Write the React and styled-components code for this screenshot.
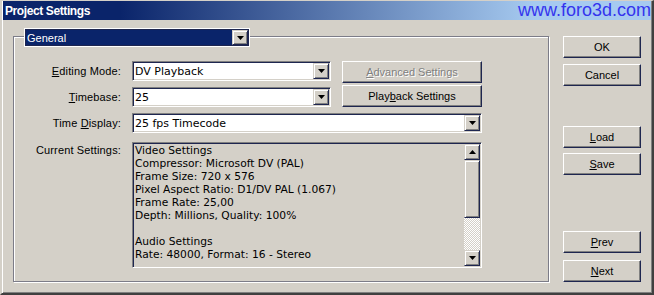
import React from 'react';
import styled, { createGlobalStyle } from 'styled-components';

const Global = createGlobalStyle`
  html, body { margin: 0; padding: 0; background: #d4d0c8; }
  body { font-family: "Liberation Sans", Arial, sans-serif; font-size: 11px; color: #000; }
  * { box-sizing: border-box; }
`;

const DARK = '#1e2650';

const Window = styled.div`
  position: relative;
  width: 654px;
  height: 295px;
  background: #d4d0c8;
  border-top: 1px solid #d4d0c8;
  border-left: 2px solid #d4d0c8;
  border-right: 2px solid #404040;
  border-bottom: 2px solid #404040;
  padding: 0 1px 1px 1px;
  box-shadow: inset 1px 0 0 #fff, inset -1px -1px 0 #808080;
  display: flex;
  flex-direction: column;
`;

const TitleBar = styled.div`
  height: 19px;
  flex: none;
  display: flex;
  align-items: flex-start;
  padding-left: 2px;
  background: linear-gradient(90deg, #0a246a 0%, #0a246a 18%, #a6caf0 82%, #a6caf0 100%);
`;

const TitleText = styled.span`
  margin-top: 2px;
  line-height: 17px;
  font-size: 12px;
  font-weight: bold;
  letter-spacing: -0.4px;
  color: #fff;
`;

const Watermark = styled.div`
  position: absolute;
  top: 0;
  right: 1px;
  font-family: "Liberation Sans", Arial, sans-serif;
  font-size: 18px;
  line-height: 18px;
  color: #3434ee;
`;

const Body = styled.div`
  flex: 1;
  display: flex;
  padding: 16px 0 0 10px;
`;

const Frame = styled.div`
  width: 536px;
  height: 246px;
  border: 1px solid #7c7c88;
  box-shadow: inset 1px 1px 0 #fff, 1px 1px 0 #fff;
  display: flex;
  flex-direction: column;
`;

const Combo = styled.div`
  display: flex;
  align-items: center;
  height: ${p => (p.$legend ? '19px' : '20px')};
  padding: ${p => (p.$legend ? '0' : '1px')};
  background: #fff;
  border: 1px solid;
  border-color: ${p => (p.$legend ? '#fff' : '#808080 #fff #fff #808080')};
  box-shadow: ${p =>
    p.$legend
      ? `inset 0 0 0 1px ${DARK}`
      : `inset 1px 1px 0 ${DARK}, inset -1px -1px 0 #d4d0c8`};
  grid-column: ${p => p.$col || 'auto'};
`;

const LegendCombo = styled(Combo)`
  align-self: flex-start;
  width: 226px;
  margin: -9px 0 0 10px;
  padding: 1px;
`;

const ComboText = styled.div`
  flex: 1;
  align-self: stretch;
  display: flex;
  align-items: center;
  padding-left: 1px;
  white-space: nowrap;
  font-family: ${p => (p.$selected ? '"Liberation Sans", Arial, sans-serif' : '"DejaVu Sans", Verdana, sans-serif')};
  font-size: 11px;
  background: ${p => (p.$selected ? '#0a246a' : 'transparent')};
  color: ${p => (p.$selected ? '#fff' : '#000')};
`;

const ArrowButton = styled.div`
  flex: none;
  width: 16px;
  height: ${p => (p.$h || 16)}px;
  display: flex;
  align-items: center;
  justify-content: center;
  background: #d4d0c8;
  border: 1px solid;
  border-color: #d4d0c8 ${DARK} ${DARK} #d4d0c8;
  box-shadow: inset 1px 1px 0 #fff, inset -1px -1px 0 #808080;
`;

const Grid = styled.div`
  margin-top: 14px;
  display: grid;
  grid-template-columns: 107px 199px 140px;
  grid-template-rows: 20px 20px 20px auto;
  column-gap: 11px;
  row-gap: 6px;
`;

const Label = styled.div`
  grid-column: 1;
  display: flex;
  align-items: ${p => (p.$top ? 'flex-start' : 'center')};
  justify-content: flex-end;
  padding-top: ${p => (p.$top ? '5px' : '0')};
  white-space: nowrap;
  line-height: 13px;
  letter-spacing: 0.15px;
`;

const ButtonStack = styled.div`
  grid-column: 3;
  grid-row: 1 / span 2;
  display: flex;
  flex-direction: column;
  gap: 2px;
`;

const Button = styled.button`
  display: block;
  width: 100%;
  height: 22px;
  margin: 0;
  margin-top: ${p => p.$mt || '0'};
  padding: 0;
  background: #d4d0c8;
  border: 1px solid;
  border-color: #fff ${DARK} ${DARK} #fff;
  box-shadow: inset -1px -1px 0 #808080;
  font-family: "Liberation Sans", Arial, sans-serif;
  font-size: 11px;
  color: ${p => (p.disabled ? '#808080' : '#000')};
  text-shadow: ${p => (p.disabled ? '1px 1px 0 #fff' : 'none')};
  text-align: center;
  white-space: nowrap;
`;

const ListBox = styled.div`
  grid-column: 2 / span 2;
  height: 126px;
  margin-top: 3px;
  display: flex;
  padding: 1px;
  background: #d4d0c8;
  border: 1px solid;
  border-color: #808080 #fff #fff #808080;
  box-shadow: inset 1px 1px 0 ${DARK}, inset -1px -1px 0 #d4d0c8;
`;

const ListText = styled.div`
  flex: 1;
  padding-left: 1px;
  font-family: "DejaVu Sans", Verdana, sans-serif;
  font-size: 10.7px;
  line-height: 13px;
  white-space: pre;
  overflow: hidden;
`;

const ScrollBar = styled.div`
  flex: none;
  width: 16px;
  display: flex;
  flex-direction: column;
`;

const Thumb = styled.div`
  height: 58px;
  background: #d4d0c8;
  border: 1px solid;
  border-color: #d4d0c8 ${DARK} ${DARK} #d4d0c8;
  box-shadow: inset 1px 1px 0 #fff, inset -1px -1px 0 #808080;
`;

const Track = styled.div`
  flex: 1;
  background-color: #fff;
  background-image: conic-gradient(#d4d0c8 25%, #fff 0 50%, #d4d0c8 0 75%, #fff 0);
  background-size: 2px 2px;
`;

const RightColumn = styled.div`
  margin-left: 14px;
  width: 78px;
  height: 246px;
  display: flex;
  flex-direction: column;
`;

const Spacer = styled.div`
  flex: 1;
`;

const Tri = ({ up }) => (
  <svg width="7" height="4" viewBox="0 0 7 4">
    <polygon points={up ? '3.5,0 7,4 0,4' : '0,0 7,0 3.5,4'} fill="#000" />
  </svg>
);

const lines = [
  'Video Settings',
  'Compressor: Microsoft DV (PAL)',
  'Frame Size: 720 x 576',
  'Pixel Aspect Ratio: D1/DV PAL (1.067)',
  'Frame Rate: 25,00',
  'Depth: Millions, Quality: 100%',
  '',
  'Audio Settings',
  'Rate: 48000, Format: 16 - Stereo',
];

export default function App() {
  return (
    <>
      <Global />
      <Window>
        <TitleBar>
          <TitleText>Project Settings</TitleText>
        </TitleBar>
        <Watermark>www.foro3d.com</Watermark>
        <Body>
          <Frame>
            <LegendCombo $legend>
              <ComboText $selected>General</ComboText>
              <ArrowButton $h={15}><Tri /></ArrowButton>
            </LegendCombo>
            <Grid>
              <Label><span><u>E</u>diting Mode:</span></Label>
              <Combo $col="2">
                <ComboText>DV Playback</ComboText>
                <ArrowButton><Tri /></ArrowButton>
              </Combo>
              <ButtonStack>
                <Button disabled><u>A</u>dvanced Settings</Button>
                <Button>Play<u>b</u>ack Settings</Button>
              </ButtonStack>
              <Label><span><u>T</u>imebase:</span></Label>
              <Combo $col="2">
                <ComboText>25</ComboText>
                <ArrowButton><Tri /></ArrowButton>
              </Combo>
              <Label><span>Time <u>D</u>isplay:</span></Label>
              <Combo $col="2 / span 2">
                <ComboText>25 fps Timecode</ComboText>
                <ArrowButton><Tri /></ArrowButton>
              </Combo>
              <Label $top><span>Current Settings:</span></Label>
              <ListBox>
                <ListText>{lines.join('\n')}</ListText>
                <ScrollBar>
                  <ArrowButton><Tri up /></ArrowButton>
                  <Thumb />
                  <Track />
                  <ArrowButton><Tri /></ArrowButton>
                </ScrollBar>
              </ListBox>
            </Grid>
          </Frame>
          <RightColumn>
            <Button>OK</Button>
            <Button $mt="6px">Cancel</Button>
            <Button $mt="40px"><u>L</u>oad</Button>
            <Button $mt="5px"><u>S</u>ave</Button>
            <Spacer />
            <Button><u>P</u>rev</Button>
            <Button $mt="7px"><u>N</u>ext</Button>
          </RightColumn>
        </Body>
      </Window>
    </>
  );
}
